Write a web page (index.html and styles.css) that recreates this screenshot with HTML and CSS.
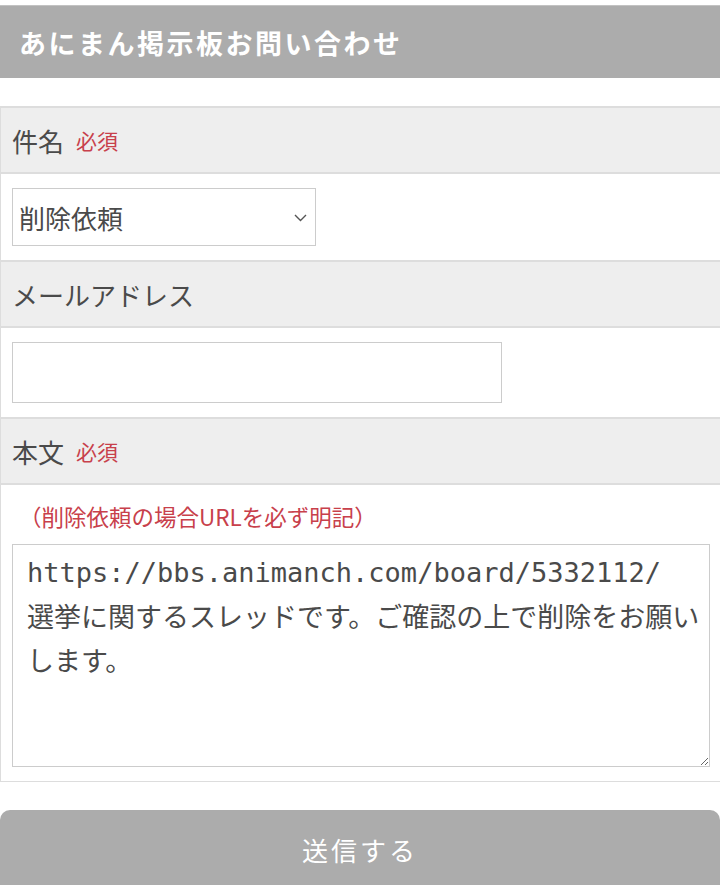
FILE: index.html
```html
<!DOCTYPE html>
<html lang="ja">
<head>
  <meta charset="UTF-8">
  <meta name="viewport" content="width=device-width, initial-scale=1.0">
  <title>あにまん掲示板お問い合わせ</title>
  <link rel="stylesheet" href="styles.css">
</head>
<body>
  <header class="page-title">
    <h1>あにまん掲示板お問い合わせ</h1>
  </header>

  <form class="contact-form">
    <div class="form-table">
      <div class="label-row">件名 <span class="required">必須</span></div>
      <div class="field-row">
        <span class="select-wrap">
          <select class="subject">
            <option>削除依頼</option>
            <option>ご意見・ご要望</option>
            <option>その他</option>
          </select>
          <svg class="chevron" width="13" height="8" viewBox="0 0 13 8"><path d="M1 1l5.5 5.5 5.5-5.5" fill="none" stroke="#555" stroke-width="1.4"/></svg>
        </span>
      </div>

      <div class="label-row">メールアドレス</div>
      <div class="field-row">
        <input class="mail" type="email">
      </div>

      <div class="label-row">本文 <span class="required">必須</span></div>
      <div class="field-row">
        <p class="note">（削除依頼の場合URLを必ず明記）</p>
        <textarea class="body-text">https://bbs.animanch.com/board/5332112/
選挙に関するスレッドです。ご確認の上で削除をお願い
します。</textarea>
      </div>
    </div>

    <button class="submit" type="button">送信する</button>
  </form>
</body>
</html>
```

FILE: styles.css
```css
body {
  margin: 0;
  font-family: "Noto Sans CJK JP", "Noto Sans", sans-serif;
  color: #444;
  background: #fff;
}

.page-title {
  margin-top: 5px;
  height: 73px;
  background: #acacac;
  border-top: 1px solid #c2c2c2;
  box-sizing: border-box;
  display: flex;
  align-items: center;
  padding-left: 19px;
}

.page-title h1 {
  margin: 0;
  color: #fff;
  font-size: 27px;
  font-weight: bold;
  letter-spacing: 2.5px;
}

.contact-form {
  margin-top: 28px;
}

.form-table {
  border-left: 1px solid #ddd;
  border-bottom: 1px solid #ddd;
}

.label-row {
  height: 68px;
  box-sizing: border-box;
  background: #eee;
  border-top: 2px solid #ddd;
  border-bottom: 2px solid #ddd;
  display: flex;
  align-items: center;
  gap: 12px;
  padding-left: 11px;
  font-size: 26px;
  color: #4a4a4a;
}

.required {
  color: #c8404b;
  font-size: 21px;
}

.field-row {
  padding: 14px 0 14px 11px;
}

.select-wrap {
  position: relative;
  display: inline-block;
}

.subject {
  appearance: none;
  width: 304px;
  height: 58px;
  border: 1px solid #ccc;
  border-radius: 0;
  background: #fff;
  padding: 0 6px;
  font-family: inherit;
  font-size: 26px;
  color: #4a4a4a;
}

.chevron {
  position: absolute;
  right: 9px;
  top: 26px;
}

.mail {
  display: block;
  width: 490px;
  height: 61px;
  box-sizing: border-box;
  border: 1px solid #ccc;
  border-radius: 0;
}

.note {
  margin: 0 0 11px 7px;
  color: #c8404b;
  font-size: 22.5px;
  line-height: 34px;
}

.body-text {
  display: block;
  width: 698px;
  height: 223px;
  box-sizing: border-box;
  border: 1px solid #ccc;
  padding: 6px 14px;
  font-family: "DejaVu Sans Mono", "Noto Sans CJK JP", monospace;
  font-size: 27px;
  line-height: 44.5px;
  color: #4a4a4a;
  white-space: pre;
  overflow: hidden;
}

.submit {
  display: block;
  width: 100%;
  height: 90px;
  margin-top: 28px;
  border: none;
  border-radius: 10px;
  background: #acacac;
  color: #fff;
  font-family: inherit;
  font-size: 26px;
  letter-spacing: 3px;
  padding-bottom: 12px;
}
```
